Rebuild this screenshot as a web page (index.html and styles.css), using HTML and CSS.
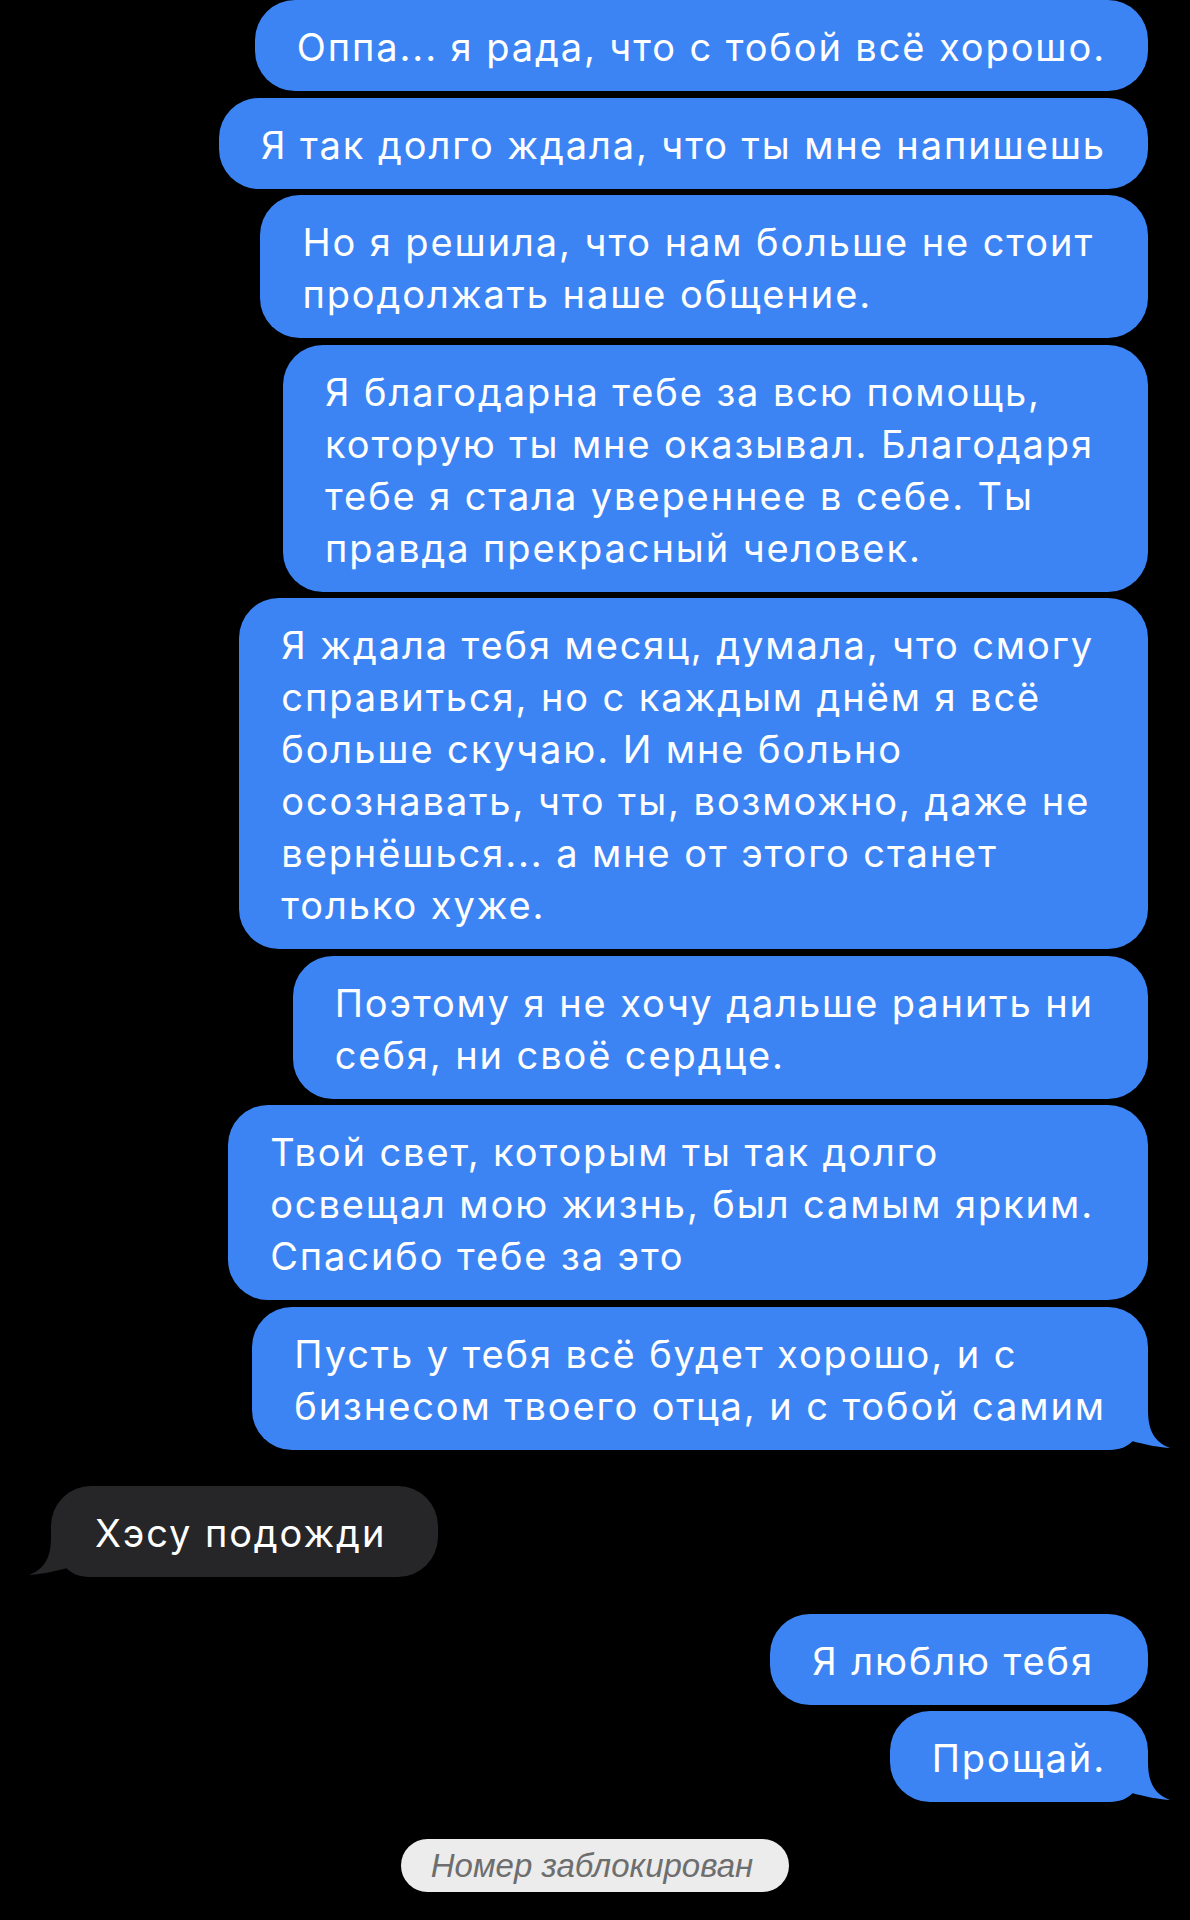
FILE: index.html
```html
<!DOCTYPE html>
<html lang="ru">
<head>
  <meta charset="UTF-8" />
  <meta name="viewport" content="width=device-width, initial-scale=1.0" />
  <title>Сообщения</title>
  <link rel="stylesheet" href="styles.css">
</head>
<body>
  <div class="chat">
    <div class="msg out">Оппа... я рада, что с тобой всё хорошо.</div>
    <div class="msg out">Я так долго ждала, что ты мне напишешь</div>
    <div class="msg out wrap">Но я решила, что нам больше не стоит<br>продолжать наше общение.</div>
    <div class="msg out wrap">Я благодарна тебе за всю помощь,<br>которую ты мне оказывал. Благодаря<br>тебе я стала увереннее в себе. Ты<br>правда прекрасный человек.</div>
    <div class="msg out wrap">Я ждала тебя месяц, думала, что смогу<br>справиться, но с каждым днём я всё<br>больше скучаю. И мне больно<br>осознавать, что ты, возможно, даже не<br>вернёшься... а мне от этого станет<br>только хуже.</div>
    <div class="msg out wrap">Поэтому я не хочу дальше ранить ни<br>себя, ни своё сердце.</div>
    <div class="msg out wrap">Твой свет, которым ты так долго<br>освещал мою жизнь, был самым ярким.<br>Спасибо тебе за это</div>
    <div class="msg out tail">Пусть у тебя всё будет хорошо, и с<br>бизнесом твоего отца, и с тобой самим
      <svg class="tail-r" viewBox="0 0 64 50" width="64" height="50"><path d="M0,0 L42,0 L42,10 C42,30 48,42 64,48 C56,48 36,44 26,41 C22,46 16,50 0,50 Z"/></svg>
    </div>

    <div class="msg in tail">Хэсу подожди
      <svg class="tail-l" viewBox="0 0 64 50" width="64" height="50"><path d="M64,0 L22,0 L22,10 C22,30 16,42 0,48 C8,48 28,44 38,41 C42,46 48,50 64,50 Z"/></svg>
    </div>

    <div class="msg out first">Я люблю тебя</div>
    <div class="msg out tail">Прощай.
      <svg class="tail-r" viewBox="0 0 64 50" width="64" height="50"><path d="M0,0 L42,0 L42,10 C42,30 48,42 64,48 C56,48 36,44 26,41 C22,46 16,50 0,50 Z"/></svg>
    </div>

    <div class="notice">Номер заблокирован</div>
  </div>
</body>
</html>
```

FILE: styles.css
```css
* {
  margin: 0;
  padding: 0;
  box-sizing: border-box;
}

body {
  background: #000;
  font-family: "Inter", "Roboto", sans-serif;
}

.chat {
  display: flex;
  flex-direction: column;
  align-items: flex-end;
  gap: 6.5px;
  padding: 0 42px 40px 0;
}

.msg {
  position: relative;
  padding: 21px 42px 18px 42px;
  border-radius: 40px;
  font-size: 38px;
  line-height: 52px;
  letter-spacing: 1.9px;
  color: #fff;
  white-space: nowrap;
}

.msg.out {
  background: #3c84f4;
}

.msg.wrap {
  padding-right: 54px;
}

.msg.in {
  align-self: flex-start;
  margin: 29.5px 0 30.5px 51px;
  padding: 21px 52px 18px 44px;
  background: #262628;
}

.msg.first {
  padding-right: 54px;
}

.tail-r,
.tail-l {
  position: absolute;
  bottom: 0;
}

.tail-r {
  right: -22px;
  fill: #3c84f4;
}

.tail-l {
  left: -22px;
  fill: #262628;
}

.notice {
  align-self: center;
  margin: 30.5px -42px 0 0;
  padding: 0 36px 0 30px;
  height: 53px;
  line-height: 53px;
  border-radius: 27px;
  background: #ececec;
  color: #6e6e6e;
  font-family: "Liberation Sans", Arial, sans-serif;
  font-style: italic;
  font-size: 33px;
}
```
